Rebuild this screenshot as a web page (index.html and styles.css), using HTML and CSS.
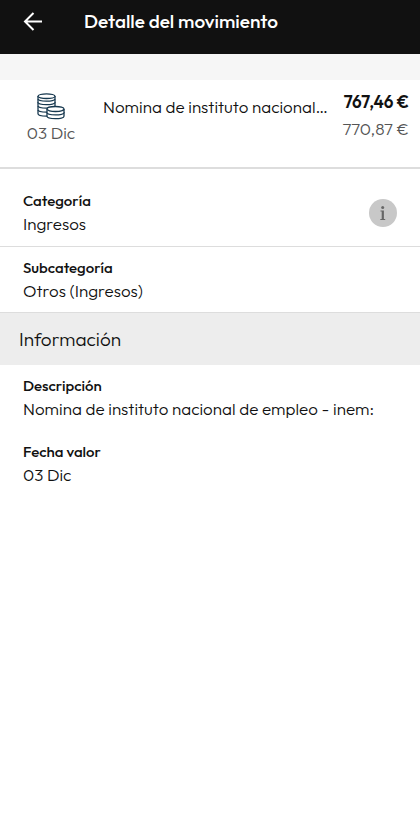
FILE: index.html
```html
<!DOCTYPE html>
<html lang="es">
<head>
<meta charset="utf-8">
<meta name="viewport" content="width=device-width, initial-scale=1">
<title>Detalle del movimiento</title>
<link rel="stylesheet" href="styles.css">
</head>
<body>
<header class="topbar">
  <button class="back" type="button" aria-label="Volver">
    <svg width="20" height="20" viewBox="0 0 20 20" fill="none" stroke="#fff" stroke-width="2"><path d="M19 10.500H2M10.500 2L2 10.500l8.500 8.500"/></svg>
  </button>
  <h1 class="title">Detalle del movimiento</h1>
</header>
<main>
  <section class="summary">
    <div class="when">
      <svg class="coins" width="28" height="28" viewBox="0 0 28 28" fill="#fff" stroke="#17384f" stroke-width="1.300">
        <path d="M1 17v3.800c0 3.200 17 3.200 17 0V17"/>
        <path d="M1 13v3.800c0 3.200 17 3.200 17 0V13"/>
        <path d="M1 9v3.800c0 3.200 17 3.200 17 0V9"/>
        <path d="M1 6v3.200c0 3.200 17 3.200 17 0V6"/>
        <path d="M1 3v2.800c0 3.200 17 3.200 17 0V3"/>
        <ellipse cx="9.500" cy="3.200" rx="8.500" ry="2.300"/>
        <path d="M10 19v4.200c0 3.200 17 3.200 17 0V19"/>
        <path d="M10 16v3.500c0 3.200 17 3.200 17 0V16"/>
        <ellipse cx="18.500" cy="16" rx="8.500" ry="2.500"/>
      </svg>
      <span class="date">03 Dic</span>
    </div>
    <p class="concept">Nomina de instituto nacional…</p>
    <div class="amounts">
      <strong class="amount">767,46 €</strong>
      <span class="balance">770,87 €</span>
    </div>
  </section>
  <dl class="fields">
    <div class="field ruled first">
      <div>
        <dt>Categoría</dt>
        <dd>Ingresos</dd>
      </div>
      <button class="info" type="button" aria-label="Más información">
        <svg width="28" height="28" viewBox="0 0 28 28"><circle cx="14" cy="14" r="14" fill="#c8c8c8"/><circle cx="13.700" cy="8.500" r="1.500" fill="#666"/><path d="M11.500 11.500h3.400v8.500h1.300v1h-4.900v-1h1.400v-7.500h-1.200z" fill="#666"/></svg>
      </button>
    </div>
    <div class="field ruled">
      <div>
        <dt>Subcategoría</dt>
        <dd>Otros (Ingresos)</dd>
      </div>
    </div>
  </dl>
  <h2 class="heading">Información</h2>
  <dl class="fields">
    <div class="field">
      <div>
        <dt>Descripción</dt>
        <dd>Nomina de instituto nacional de empleo - inem:</dd>
      </div>
    </div>
    <div class="field">
      <div>
        <dt>Fecha valor</dt>
        <dd>03 Dic</dd>
      </div>
    </div>
  </dl>
</main>
</body>
</html>
```
FILE: styles.css
```css
* { box-sizing: border-box; }
body {
  margin: 0;
  background: #fff;
  color: #111;
  font-family: Outfit, Lato, sans-serif;
  font-size: 17px;
  font-weight: 300;
  line-height: 24px;
}
h1, h2, p, dl, dd { margin: 0; }
button { padding: 0; border: 0; background: none; cursor: pointer; }
svg { display: block; }
.topbar {
  display: flex;
  align-items: center;
  gap: 41px;
  padding: 7px 23px 19px;
  background: #111;
  color: #fff;
}
.back { flex: none; }
.title { font-size: 19px; line-height: 28px; font-weight: 500; }
.summary {
  display: flex;
  align-items: flex-start;
  border-top: 26px solid #f6f6f6;
  border-bottom: 2px solid #ddd;
  padding: 10px 11px 22px 20px;
}
.when {
  flex: none;
  width: 62px;
  display: flex;
  flex-direction: column;
  align-items: center;
  padding-top: 3px;
}
.date { color: #555; }
.concept {
  flex: 1;
  min-width: 0;
  margin: 5px 8px 0 21px;
  overflow: hidden;
  white-space: nowrap;
  text-overflow: ellipsis;
}
.amounts {
  flex: none;
  display: flex;
  flex-direction: column;
  gap: 3px;
  text-align: right;
}
.amount { font-weight: 600; }
.balance { color: #555; }
.field {
  display: flex;
  align-items: center;
  justify-content: space-between;
  padding: 10px 23px;
}
.ruled { border-bottom: 1px solid #ddd; }
.ruled:not(.first) { padding-bottom: 9px; }
.first { padding-top: 21px; }
dt { font-size: 15px; line-height: 22px; font-weight: 500; }
.heading {
  padding: 14px 19px;
  background: #ededed;
  font-size: 19px;
  font-weight: 300;
}
```
